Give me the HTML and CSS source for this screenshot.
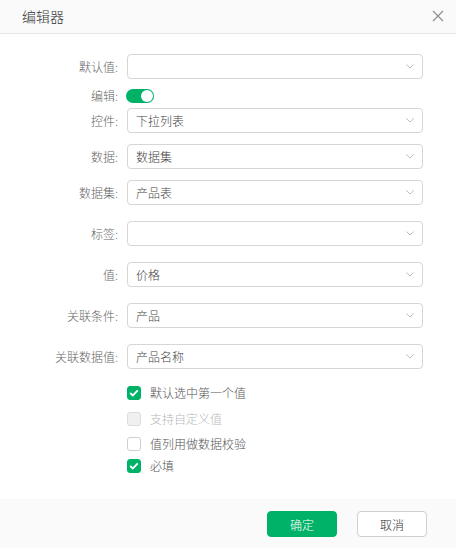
FILE: index.html
```html
<!DOCTYPE html>
<html lang="zh">
<head>
<meta charset="utf-8">
<title>编辑器</title>
<link rel="stylesheet" href="styles.css">
</head>
<body>
<div class="dialog">
  <div class="header">
    <span class="title">编辑器</span>
    <svg class="close" width="12" height="12" viewBox="0 0 12 12"><path d="M1 1L11 11M11 1L1 11" stroke="#8c8c8c" stroke-width="1.1" fill="none"/></svg>
  </div>
  <div class="content">
    <div class="row r-first">
      <label class="lbl">默认值:</label>
      <div class="select"><span class="val"></span><svg class="chev" width="8" height="5" viewBox="0 0 8 5"><path d="M0.5 0.5L4 4L7.5 0.5" stroke="#bdbdbd" fill="none"/></svg></div>
    </div>
    <div class="row row-toggle">
      <label class="lbl">编辑:</label>
      <div class="toggle"><span class="knob"></span></div>
    </div>
    <div class="row r-4">
      <label class="lbl">控件:</label>
      <div class="select"><span class="val">下拉列表</span><svg class="chev" width="8" height="5" viewBox="0 0 8 5"><path d="M0.5 0.5L4 4L7.5 0.5" stroke="#bdbdbd" fill="none"/></svg></div>
    </div>
    <div class="row r-11">
      <label class="lbl">数据:</label>
      <div class="select"><span class="val">数据集</span><svg class="chev" width="8" height="5" viewBox="0 0 8 5"><path d="M0.5 0.5L4 4L7.5 0.5" stroke="#bdbdbd" fill="none"/></svg></div>
    </div>
    <div class="row r-11">
      <label class="lbl">数据集:</label>
      <div class="select"><span class="val">产品表</span><svg class="chev" width="8" height="5" viewBox="0 0 8 5"><path d="M0.5 0.5L4 4L7.5 0.5" stroke="#bdbdbd" fill="none"/></svg></div>
    </div>
    <div class="row r-16">
      <label class="lbl">标签:</label>
      <div class="select"><span class="val"></span><svg class="chev" width="8" height="5" viewBox="0 0 8 5"><path d="M0.5 0.5L4 4L7.5 0.5" stroke="#bdbdbd" fill="none"/></svg></div>
    </div>
    <div class="row r-16">
      <label class="lbl">值:</label>
      <div class="select"><span class="val">价格</span><svg class="chev" width="8" height="5" viewBox="0 0 8 5"><path d="M0.5 0.5L4 4L7.5 0.5" stroke="#bdbdbd" fill="none"/></svg></div>
    </div>
    <div class="row r-16">
      <label class="lbl">关联条件:</label>
      <div class="select"><span class="val">产品</span><svg class="chev" width="8" height="5" viewBox="0 0 8 5"><path d="M0.5 0.5L4 4L7.5 0.5" stroke="#bdbdbd" fill="none"/></svg></div>
    </div>
    <div class="row r-16">
      <label class="lbl">关联数据值:</label>
      <div class="select"><span class="val">产品名称</span><svg class="chev" width="8" height="5" viewBox="0 0 8 5"><path d="M0.5 0.5L4 4L7.5 0.5" stroke="#bdbdbd" fill="none"/></svg></div>
    </div>
    <div class="checks">
      <div class="check c-first"><span class="box on"><svg width="10" height="8" viewBox="0 0 10 8"><path d="M1.2 4L3.8 6.4L8.8 1.4" stroke="#fff" stroke-width="1.8" fill="none"/></svg></span><span class="ctext">默认选中第一个值</span></div>
      <div class="check c-8 disabled"><span class="box dis"></span><span class="ctext">支持自定义值</span></div>
      <div class="check c-7"><span class="box"></span><span class="ctext">值列用做数据校验</span></div>
      <div class="check c-4"><span class="box on"><svg width="10" height="8" viewBox="0 0 10 8"><path d="M1.2 4L3.8 6.4L8.8 1.4" stroke="#fff" stroke-width="1.8" fill="none"/></svg></span><span class="ctext">必填</span></div>
    </div>
  </div>
  <div class="footer">
    <button class="btn primary">确定</button>
    <button class="btn">取消</button>
  </div>
</div>
</body>
</html>
```
FILE: styles.css
```css
* { box-sizing: border-box; }
html, body { margin: 0; padding: 0; background: #fff; }
body {
  width: 456px;
  height: 548px;
  font-family: "Noto Sans CJK SC", "Noto Sans", sans-serif;
  font-size: 12px;
  font-weight: 300;
  color: #333;
}
.dialog {
  width: 456px;
  height: 548px;
  display: flex;
  flex-direction: column;
}
.header {
  height: 34px;
  background: #fafafa;
  border-bottom: 1px solid #e6e6e6;
  display: flex;
  align-items: center;
  justify-content: space-between;
  padding: 0 12px 0 22px;
  flex: none;
}
.title {
  font-size: 14px;
  color: #333;
  line-height: 20px;
  margin-top: -2px;
}
.close { display: block; margin-top: -2px; }
.content {
  flex: 1;
  padding-top: 20px;
}
.row {
  display: flex;
  align-items: center;
  height: 25px;
}
.r-first { margin-top: 0; }
.row-toggle { height: 16px; margin-top: 9px; }
.r-4 { margin-top: 4px; }
.r-11 { margin-top: 11px; }
.r-16 { margin-top: 16px; }
.lbl {
  width: 119px;
  padding-right: 1px;
  text-align: right;
  color: #666;
  font-size: 12px;
  line-height: 16px;
  flex: none;
}
.select {
  margin-left: 8px;
  width: 296px;
  height: 25px;
  border: 1px solid #d6d6d6;
  border-radius: 4px;
  display: flex;
  align-items: center;
  justify-content: space-between;
  padding: 0 8px 0 8px;
}
.val { color: #444; font-size: 12px; line-height: 16px; }
.chev { display: block; }
.toggle {
  margin-left: 7px;
  width: 28px;
  height: 14px;
  border-radius: 7px;
  background: #00b267;
  position: relative;
}
.knob {
  position: absolute;
  right: 1px;
  top: 1px;
  width: 12px;
  height: 12px;
  border-radius: 50%;
  background: #fff;
}
.checks { margin-top: 15px; }
.check {
  display: flex;
  align-items: center;
  height: 18px;
  padding-left: 127px;
}
.c-8 { margin-top: 8px; }
.c-7 { margin-top: 7px; }
.c-4 { margin-top: 4px; }
.box {
  width: 14px;
  height: 14px;
  border: 1px solid #cfcfcf;
  border-radius: 3px;
  background: #fff;
  display: flex;
  align-items: center;
  justify-content: center;
  flex: none;
}
.box.on { background: #00b267; border-color: #00b267; }
.box.dis { background: #f0f0f0; border-color: #dcdcdc; }
.box svg { display: block; }
.ctext {
  margin-left: 9px;
  color: #555;
  font-size: 12px;
  line-height: 16px;
}
.disabled .ctext { color: #b8b8b8; }
.footer {
  height: 49px;
  background: #fafafa;
  display: flex;
  align-items: center;
  justify-content: flex-end;
  gap: 20px;
  padding-right: 29px;
  flex: none;
}
.btn {
  width: 70px;
  height: 26px;
  border: 1px solid #d0d0d0;
  border-radius: 4px;
  background: #fff;
  color: #333;
  font-family: "Noto Sans CJK SC", "Noto Sans", sans-serif;
  font-size: 12px;
  font-weight: 300;
  padding: 0;
  margin-top: 1px;
}
.btn.primary {
  background: #00b267;
  border-color: #00b267;
  color: #fff;
}
```
